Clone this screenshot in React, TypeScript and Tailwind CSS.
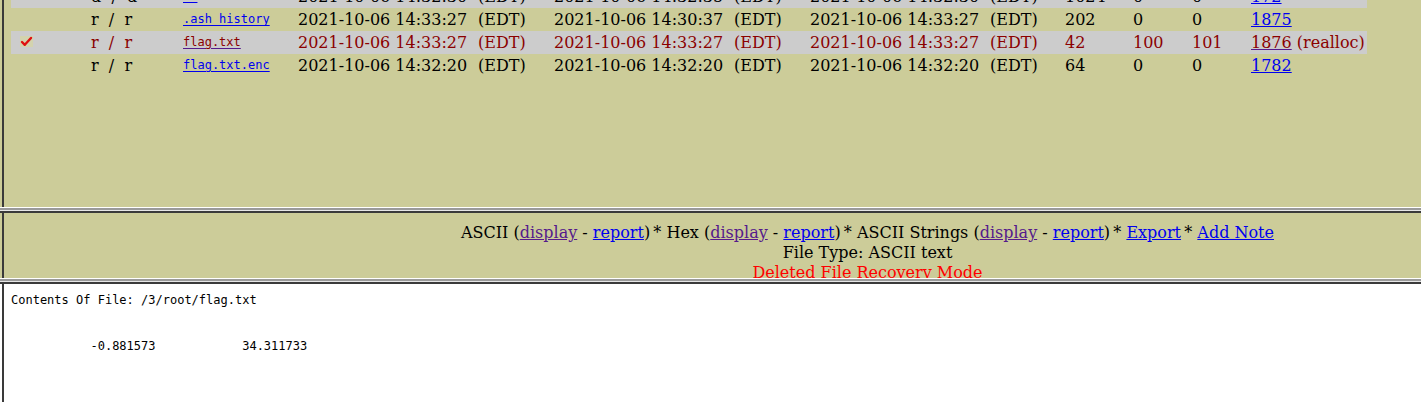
type Row = {
  mode: string;
  name: string;
  written: string;
  accessed: string;
  changed: string;
  size: string;
  uid: string;
  gid: string;
  meta: string;
  gray?: boolean;
  deleted?: boolean;
  checked?: boolean;
};

const rows: Row[] = [
  {
    mode: "d  /  d",
    name: "..",
    written: "2021-10-06 14:32:30",
    accessed: "2021-10-06 14:32:35",
    changed: "2021-10-06 14:32:30",
    size: "1024",
    uid: "0",
    gid: "0",
    meta: "172",
    gray: true,
  },
  {
    mode: "r  /  r",
    name: ".ash_history",
    written: "2021-10-06 14:33:27",
    accessed: "2021-10-06 14:30:37",
    changed: "2021-10-06 14:33:27",
    size: "202",
    uid: "0",
    gid: "0",
    meta: "1875",
  },
  {
    mode: "r  /  r",
    name: "flag.txt",
    written: "2021-10-06 14:33:27",
    accessed: "2021-10-06 14:33:27",
    changed: "2021-10-06 14:33:27",
    size: "42",
    uid: "100",
    gid: "101",
    meta: "1876",
    gray: true,
    deleted: true,
    checked: true,
  },
  {
    mode: "r  /  r",
    name: "flag.txt.enc",
    written: "2021-10-06 14:32:20",
    accessed: "2021-10-06 14:32:20",
    changed: "2021-10-06 14:32:20",
    size: "64",
    uid: "0",
    gid: "0",
    meta: "1782",
  },
];

function Stamp({ value }: { value: string }) {
  return (
    <div className="flex">
      <span className="w-[180px] shrink-0">{value}</span>
      <span>(EDT)</span>
    </div>
  );
}

function Divider() {
  return (
    <div className="shrink-0">
      <div className="h-px bg-white" />
      <div className="h-[2px] bg-[#9a9a9a]" />
      <div className="h-px bg-[#e6e6e6]" />
      <div className="h-[2px] bg-[#3a3a3a]" />
    </div>
  );
}

function FileRow({ row }: { row: Row }) {
  const text = row.deleted ? "text-[#8b0000]" : "text-black";
  const link = row.deleted
    ? "text-[#8b0000] decoration-[#551a8b]"
    : "text-[#0000ee] decoration-[#0000ee]";
  return (
    <div
      className={[
        "grid h-[23px] w-[1356px] shrink-0 grid-cols-[80px_92px_115px_256px_256px_255px_68px_59px_59px_116px] items-center whitespace-nowrap leading-[23px]",
        row.gray ? "bg-[#cccccc]" : "",
        text,
      ].join(" ")}
    >
      <div className="flex h-full items-center pl-[9px]">
        {row.checked && (
          <svg viewBox="0 0 13 11" className="mb-[3px] h-[11px] w-[13px]" aria-hidden="true">
            <rect width="13" height="11" fill="#d3d3ae" />
            <path
              d="M2 6l2.8 2.8L11 2"
              fill="none"
              stroke="#e01010"
              strokeWidth="2.4"
              strokeLinecap="round"
              strokeLinejoin="round"
            />
          </svg>
        )}
      </div>
      <div className="whitespace-pre">{row.mode}</div>
      <div className="font-['DejaVu_Sans_Mono',monospace] text-[12px]">
        <a className={`underline underline-offset-2 ${link}`}>{row.name}</a>
      </div>
      <Stamp value={row.written} />
      <Stamp value={row.accessed} />
      <Stamp value={row.changed} />
      <div>{row.size}</div>
      <div>{row.uid}</div>
      <div>{row.gid}</div>
      <div>
        <a className={`underline ${link}`}>{row.meta}</a>
        {row.deleted && <span> (realloc)</span>}
      </div>
    </div>
  );
}

export default function App() {
  return (
    <div className="flex h-[402px] w-[1421px] flex-col overflow-hidden font-['DejaVu_Serif',serif] text-[16px]">
      {/* file list frame */}
      <div className="flex h-[207px] shrink-0 overflow-hidden bg-[#cccc99] pl-[2px]">
        <div className="flex flex-1 flex-col border-l-2 border-[#3a3a3a] pl-[7px]">
          <div className="mt-[-15px] flex flex-col">
            {rows.map((row) => (
              <FileRow key={row.name} row={row} />
            ))}
          </div>
        </div>
      </div>

      <Divider />

      {/* view options frame */}
      <div className="flex h-[65px] shrink-0 overflow-hidden bg-[#cccc99] pl-[2px]">
        <div className="flex-1 border-l-2 border-[#3a3a3a] pl-[310px] pt-[10px] text-center leading-[20px] text-black">
          <div>
            ASCII (<a className="text-[#551a8b] underline">display</a> -{" "}
            <a className="text-[#0000ee] underline">report</a>)&thinsp;* Hex (
            <a className="text-[#551a8b] underline">display</a> -{" "}
            <a className="text-[#0000ee] underline">report</a>)&thinsp;* ASCII Strings (
            <a className="text-[#551a8b] underline">display</a> -{" "}
            <a className="text-[#0000ee] underline">report</a>)&thinsp;*{" "}
            <a className="text-[#0000ee] underline">Export</a>&thinsp;*{" "}
            <a className="text-[#0000ee] underline">Add Note</a>
          </div>
          <div>File Type: ASCII text</div>
          <div className="text-[#ff0000]">Deleted File Recovery Mode</div>
        </div>
      </div>

      <Divider />

      {/* contents frame */}
      <div className="flex flex-1 bg-white pl-[2px]">
        <div className="flex-1 border-l-2 border-[#3a3a3a] pl-[7px] pt-[9px] font-['DejaVu_Sans_Mono',monospace] text-[12px] leading-[14px] text-black">
          <div>Contents Of File: /3/root/flag.txt</div>
          <pre className="mt-[32px] font-['DejaVu_Sans_Mono',monospace]">
            {"           -0.881573            34.311733"}
          </pre>
        </div>
      </div>
    </div>
  );
}
